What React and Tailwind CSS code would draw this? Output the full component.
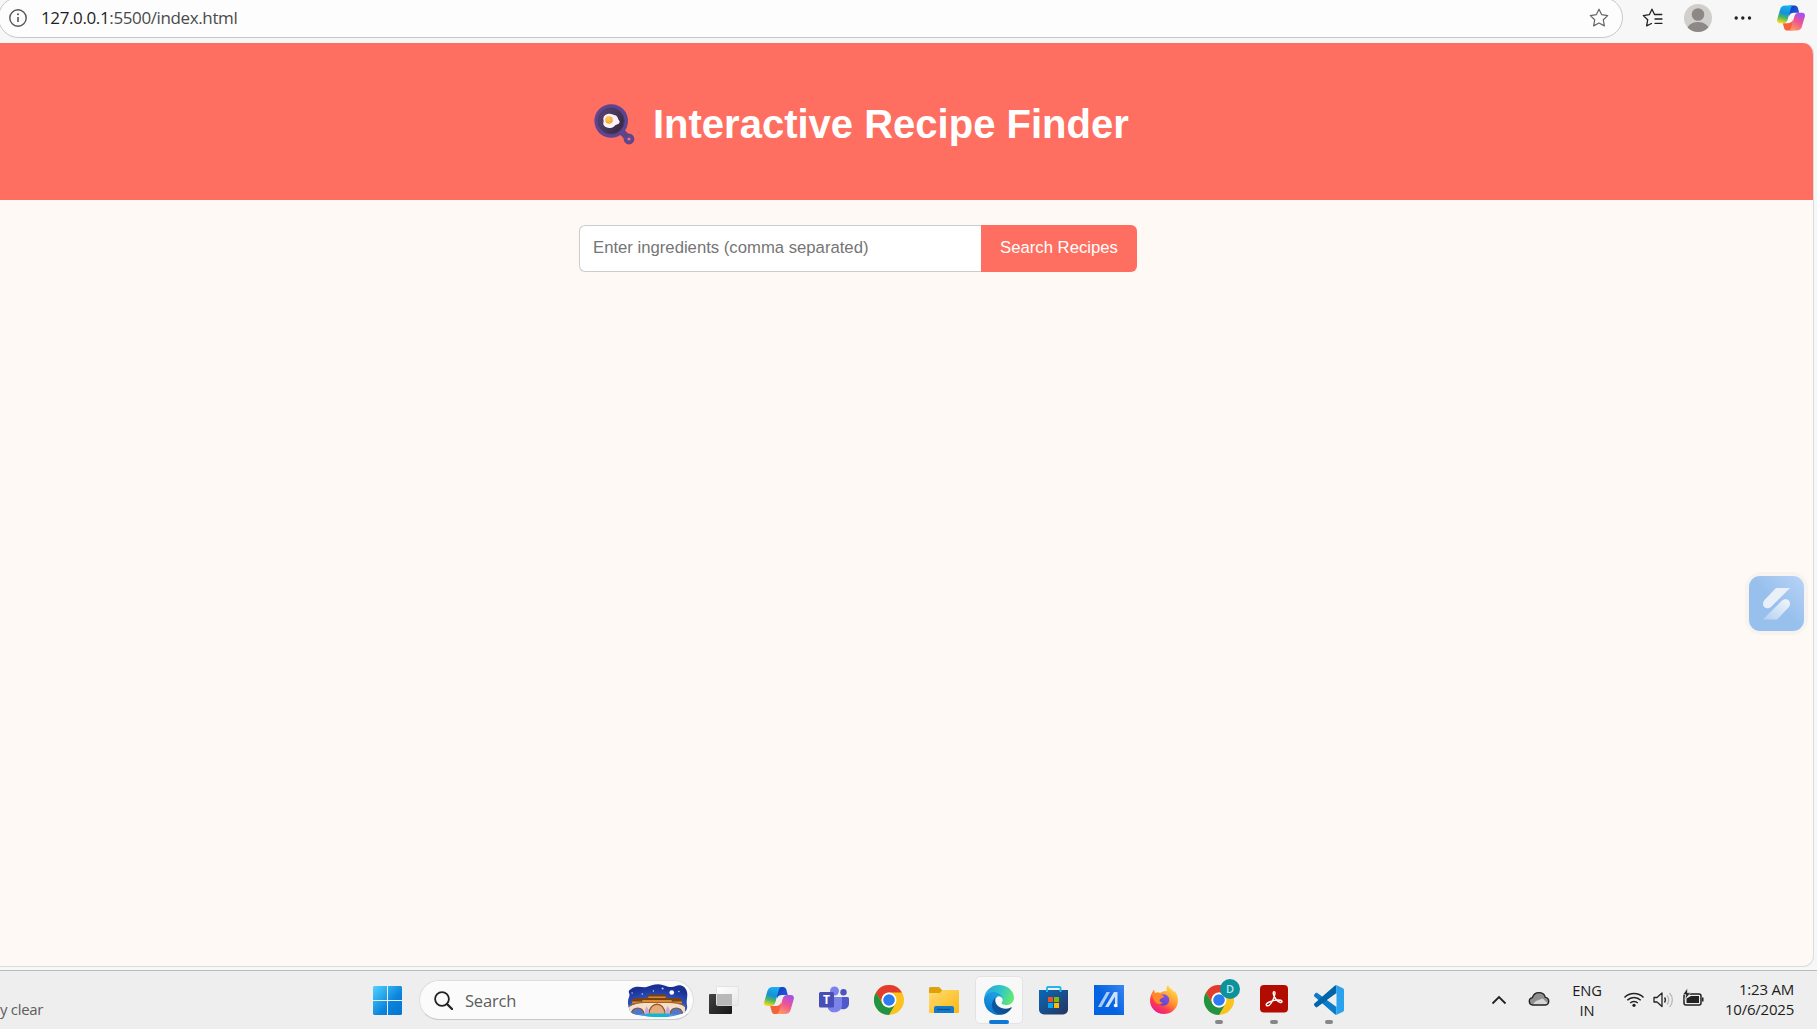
import React from "react";

const UI = "font-['Open_Sans','Noto_Sans',sans-serif]";

function Copilot({ id, className }) {
  return (
    <svg className={className} viewBox="0 0 30 27">
      <defs>
        <linearGradient id={id + "a"} x1="0.6" y1="0" x2="0.35" y2="1">
          <stop offset="0" stopColor="#18b0f4" />
          <stop offset="0.45" stopColor="#1590d8" />
          <stop offset="0.7" stopColor="#4cb860" />
          <stop offset="1" stopColor="#f5d820" />
        </linearGradient>
        <linearGradient id={id + "b"} x1="0.8" y1="0" x2="0.3" y2="1">
          <stop offset="0" stopColor="#a050f4" />
          <stop offset="0.5" stopColor="#ee5592" />
          <stop offset="1" stopColor="#ff9a62" />
        </linearGradient>
        <linearGradient id={id + "c"} x1="0" y1="0" x2="1" y2="1">
          <stop offset="0" stopColor="#1238b8" />
          <stop offset="1" stopColor="#2265e8" />
        </linearGradient>
      </defs>
      <path d="M13 0h6c1.800 0 2.800 1 3.300 2.600L23.800 8H18c-2.500 0-4 .8-5 3.500z" fill={`url(#${id}c)`} />
      <path d="M17 27h-6c-1.800 0-2.800-1-3.300-2.600L6.200 19H12c2.500 0 4-.8 5-3.500z" fill="#f4613c" />
      <path d="M9 0h9c-1.700 0-2.600 1-3.200 3L11.600 14.500C10.700 17.700 9.300 19 6.500 19H3.200C.6 19-.4 17.300.3 14.700L3.400 4C4.200 1.300 6 0 9 0z" fill={`url(#${id}a)`} />
      <path d="M21 27h-9c1.700 0 2.600-1 3.200-3L18.400 12.500C19.300 9.300 20.700 8 23.500 8h3.300c2.600 0 3.600 1.700 2.900 4.300L26.600 23C25.800 25.700 24 27 21 27z" fill={`url(#${id}b)`} />
    </svg>
  );
}

function Chrome() {
  return (
    <svg className="size-[30px]" viewBox="0 0 48 48">
      <circle cx="24" cy="24" r="24" fill="#fcc31e" />
      <path d="M3.200 12A24 24 0 0 1 44.800 12H24a12 12 0 0 0-10.400 18z" fill="#e33b2e" />
      <path d="M3.200 12A24 24 0 0 0 24 48L34.400 30A12 12 0 0 1 13.600 30z" fill="#229342" />
      <circle cx="24" cy="24" r="12" fill="#fff" />
      <circle cx="24" cy="24" r="9.300" fill="#2b7cf0" />
    </svg>
  );
}

function Pan() {
  return (
    <svg className="h-[41px] w-[41px]" viewBox="0 0 41 41">
      <defs>
        <linearGradient id="panIn" x1="0" y1="0" x2="1" y2="0.6">
          <stop offset="0" stopColor="#5c4674" />
          <stop offset="1" stopColor="#372b45" />
        </linearGradient>
        <radialGradient id="yolk" cx="0.4" cy="0.3" r="0.8">
          <stop offset="0" stopColor="#ffd050" />
          <stop offset="1" stopColor="#f09a2c" />
        </radialGradient>
      </defs>
      <path d="M26 26l7.500 7.500" stroke="#5d4586" strokeWidth="6.500" />
      <circle cx="35" cy="35" r="3.500" fill="none" stroke="#5d4590" strokeWidth="3.800" />
      <circle cx="17.200" cy="17" r="16.800" fill="#5d4590" />
      <circle cx="17.200" cy="17" r="13" fill="url(#panIn)" stroke="#4b3768" />
      <path d="M13.500 10c3-1 5 .5 7 1s3 1.500 3.500 3.500 2 2 1.500 4-3 1.500-4.500 3-3 3-5.500 2.500-4-.5-5.500-2.500 0-3-.5-5.500.5-5 4-6z" fill="#fbf1fb" />
      <circle cx="15" cy="16" r="3.800" fill="url(#yolk)" />
    </svg>
  );
}

function Star({ className }) {
  return (
    <svg className={className} viewBox="0 0 20 20" fill="none" stroke="currentColor" strokeWidth="1.200" strokeLinejoin="round">
      <path d="M10 1.200l2.700 5.500 6 .9-4.400 4.200 1.100 6.100L10 15l-5.400 2.900 1.100-6.100L1.300 7.600l6-.9z" />
    </svg>
  );
}

function AddressBar() {
  return (
    <div className="flex h-[43px] shrink-0 items-start bg-[#f7f7f7]">
      <div className="-ml-[2px] -mt-[3px] flex h-[41px] w-[1625px] items-center rounded-full border border-[#c6c6c6] bg-[#fdfdfd] pl-[10px] pr-[13px] pt-[1px]">
        <svg className="size-[18px]" viewBox="0 0 18 18" fill="none" stroke="#555" strokeWidth="1.400">
          <circle cx="9" cy="9" r="8.200" />
          <path d="M9 8v5" strokeWidth="1.600" />
          <circle cx="9" cy="5.300" r="1" fill="#555" stroke="none" />
        </svg>
        <div className={`${UI} ml-[14px] mt-[-1px] text-[17px] leading-[24px] tracking-[-0.380px] text-[#4a4a4a]`}>
          <span className="text-[#1f1f1f]">127.0.0.1</span>:5500/index.html
        </div>
        <Star className="ml-auto size-[20px] text-[#666]" />
      </div>
      <svg className="ml-[19px] mt-[8px] h-[20px] w-[21px]" viewBox="0 0 21 20" fill="none" stroke="#222" strokeWidth="1.300" strokeLinejoin="round" strokeLinecap="round">
        <path d="M12.500 6.500L10 1.200 7.300 6.700l-6 .9 4.400 4.200-1.100 6.100L9.500 15.500M12.500 6.500h7.300M13 11h7M13 15.300h7" />
      </svg>
      <svg className="ml-[21px] mt-[4px] size-[28px]" viewBox="0 0 28 28">
        <clipPath id="av"><circle cx="14" cy="14" r="14" /></clipPath>
        <circle cx="14" cy="14" r="14" fill="#d1cfcc" />
        <g clipPath="url(#av)" fill="#8c8886">
          <circle cx="14" cy="10.500" r="6.300" />
          <ellipse cx="14" cy="26" rx="11" ry="8" />
        </g>
      </svg>
      <svg className="ml-[22px] mt-[16px] h-[4px] w-[18px]" viewBox="0 0 18 4" fill="#222">
        <circle cx="2.200" cy="2" r="1.700" /><circle cx="8.800" cy="2" r="1.700" /><circle cx="15.500" cy="2" r="1.700" />
      </svg>
      <Copilot id="top" className="ml-[25px] mt-[5px] h-[26px] w-[28px]" />
    </div>
  );
}

function Page() {
  return (
    <div className="flex h-[924px] w-[1814px] shrink-0 flex-col overflow-hidden rounded-r-[11px] border-b border-r border-[#dcdcdc] bg-[#fff9f5] font-['Liberation_Sans',Arial,sans-serif]">
      <header className="flex h-[157px] shrink-0 items-start bg-[#ff6f61] pl-[594px] pt-[61px]">
        <Pan />
        <h1 className="ml-[18px] mt-[-3px] whitespace-nowrap text-[40px] font-bold leading-[46px] text-white">Interactive Recipe Finder</h1>
      </header>
      <div className="ml-[579px] mt-[25px] flex h-[47px]">
        <input
          className="w-[402px] rounded-l-[6px] border border-r-0 border-[#ccc] bg-white pb-[1px] pl-[13px] text-[16.700px] placeholder-[#757575] outline-none"
          placeholder="Enter ingredients (comma separated)"
        />
        <button className="w-[156px] rounded-r-[6px] bg-[#ff6f61] pb-[1px] text-[16.700px] text-white">Search Recipes</button>
      </div>
    </div>
  );
}

function FloatingBadge() {
  return (
    <div className="absolute left-[1745px] top-[572px] flex size-[63px] items-center justify-center rounded-[16px] bg-[#f7f3f1]">
      <svg className="size-[55px]" viewBox="0 0 55 55">
        <defs>
          <linearGradient id="bb" x1="1" y1="0" x2="0.5" y2="0.5">
            <stop offset="0" stopColor="#b9d3f6" />
            <stop offset="1" stopColor="#98c0ed" />
          </linearGradient>
          <linearGradient id="bs" x1="0" y1="1" x2="1" y2="0">
            <stop offset="0" stopColor="#b3d0f1" />
            <stop offset="1" stopColor="#f3f6fa" />
          </linearGradient>
        </defs>
        <rect width="55" height="55" rx="11" fill="url(#bb)" />
        <path d="M27 12h14L22 31c-4 3-8 .5-8-3 0-2 .7-3 2-4.500z" fill="#eaf0f8" />
        <path d="M28 43.500H14L33 24.500c4-3 8-.5 8 3 0 2-.7 3-2 4.500z" fill="url(#bs)" />
      </svg>
    </div>
  );
}

function SearchArt() {
  return (
    <svg className="h-[33px] w-[62px]" viewBox="0 0 61 33" preserveAspectRatio="none">
      <defs>
        <radialGradient id="sky" cx="0.5" cy="0.9" r="0.8" fx="0.5" fy="1">
          <stop offset="0" stopColor="#12c4dc" />
          <stop offset="0.3" stopColor="#5a90e0" />
          <stop offset="0.7" stopColor="#2a4fb8" />
          <stop offset="1" stopColor="#1a2f94" />
        </radialGradient>
        <clipPath id="blob"><path d="M5 5C10 1 16 4 20 3S30-1 36 1s8 3 13 1 10 1 11 6-1 8 0 13-2 8-6 9-10 3-16 3-14 0-20-1-12-1-14-5-3-10-1-14S0 8 5 5z" /></clipPath>
      </defs>
      <g clipPath="url(#blob)">
        <path fill="url(#sky)" d="M0 0h61v33H0z" />
        <path d="M20 13l2-2.500h17l2 2.500zM12 17l3-3h31l3 3zM5 18l3-4h7v4zM46 18v-4h7l3 4z" fill="#7c4010" />
        <path d="M22 12.500h17v1.500H22zM16 16h29v2.500H16zM6 17.500h9v2H6zM46 17.500h9v2h-9z" fill="#d68c30" />
        <path d="M3 30v-7c5-3 9-4 14-4h27c5 0 10 1 14 4v7h-2c-2-8-11-8-13 0h-4c-1-13-16-13-17 0h-4c-2-8-11-8-13 0z" fill="#f3dfca" />
        <path d="M22.500 30c1-13 15-13 16 0z" fill="#e3ac80" />
        <path d="M22.500 30c1-13 15-13 16 0" fill="none" stroke="#9d5c22" strokeWidth="1.300" />
        <path d="M5 30c2-8 11-8 13 0M43 30c2-8 11-8 13 0" fill="#5078c8" stroke="#8a5222" strokeWidth="1.200" />
        <path d="M3 22c5-3 9-3.500 14-3.500h27c5 0 10 .5 14 3.500" fill="none" stroke="#a9601b" />
        <path d="M18 29l2-7 2.500 4v4h-4zM38 29l3-7 2 4v4h-4z" fill="#c9a8dc" />
        <path d="M20 29.500h22V33H20z" fill="#10b8cf" />
        <circle cx="45" cy="8.500" r="2.300" fill="#fff" />
        <g fill="#bfd0f6"><circle cx="16" cy="10" r=".8" /><circle cx="27" cy="7" r=".7" /><circle cx="36" cy="4.500" r="1" /><circle cx="6" cy="9" r=".7" /><circle cx="52" cy="7.500" r=".8" /></g>
      </g>
    </svg>
  );
}

function Teams() {
  return (
    <svg className="size-[30px]" viewBox="0 0 30 30">
      <circle cx="24.500" cy="7.300" r="3.200" fill="#4b53bc" />
      <circle cx="15.500" cy="6" r="4.500" fill="#7b83eb" />
      <path d="M20 12h8.500c.8 0 1.500.6 1.500 1.500V19a5.500 5.500 0 0 1-8 4.700z" fill="#5059c9" />
      <path d="M9 12h14v8.500a7.500 7.500 0 0 1-14 3z" fill="#7b83eb" />
      <rect y="7" width="15" height="15.500" rx="1.500" fill="#474eb5" />
      <text x="7.500" y="19" textAnchor="middle" fontSize="12" fontWeight="bold" fontFamily="Open Sans, sans-serif" fill="#fff">T</text>
    </svg>
  );
}

function Edge() {
  return (
    <svg className="size-[30px]" viewBox="0 0 256 256">
      <defs>
        <linearGradient id="e1" x1="0" y1="0" x2="1" y2="0"><stop offset="0" stopColor="#0c59a4" /><stop offset="1" stopColor="#114a8b" /></linearGradient>
        <linearGradient id="e2" x1="0.6" y1="0.2" x2="0.3" y2="1"><stop offset="0" stopColor="#1b9de2" /><stop offset="1" stopColor="#0672cb" /></linearGradient>
        <linearGradient id="e3" x1="0" y1="0.3" x2="1" y2="0.6"><stop offset="0" stopColor="#2aa5e0" /><stop offset="0.5" stopColor="#2fc5c8" /><stop offset="1" stopColor="#66eb6e" /></linearGradient>
      </defs>
      <path fill="url(#e1)" d="M231 190.500c-3.400 1.800-6.900 3.400-10.500 4.700a101 101 0 0 1-36 6.500c-47.400 0-88.700-32.600-88.700-74.500a31.600 31.600 0 0 1 16.500-27.300c-42.900 1.800-53.900 46.500-53.900 72.700 0 74 68.200 81.500 82.900 81.500 7.900 0 19.800-2.300 27-4.600l1.300-.4a128.300 128.300 0 0 0 66.600-52.800 4 4 0 0 0-5.200-5.800z" />
      <path fill="url(#e2)" d="M105.700 241.400a79.200 79.200 0 0 1-22.700-21.300 80.700 80.700 0 0 1 29.500-120.200c3.100-1.500 8.400-4.100 15.500-4a32.400 32.400 0 0 1 25.700 13 31.900 31.900 0 0 1 6.300 18.700c0-.2 24.500-79.600-80-79.600-43.900 0-80 41.700-80 78.200a130.200 130.200 0 0 0 12.100 56 128 128 0 0 0 156.400 67 75.500 75.500 0 0 1-62.800-7.800z" />
      <path fill="url(#e3)" d="M152.300 148.900c-.8 1-3.300 2.500-3.300 5.700 0 2.600 1.700 5.100 4.700 7.300 14.400 10 41.500 8.600 41.600 8.600a59.600 59.600 0 0 0 30.300-8.300 61.400 61.400 0 0 0 30.400-52.900c.3-22.400-8-37.300-11.300-43.900C223.500 23.900 177.700 0 128 0A128 128 0 0 0 0 126.200c.5-36.500 36.800-66 80-66 3.500 0 23.500.3 42 10a72.600 72.600 0 0 1 30.900 29.300c6.100 10.600 7.200 24.100 7.200 29.500 0 5.400-2.700 13.300-7.800 19.900z" />
    </svg>
  );
}

function Firefox() {
  return (
    <svg className="size-[30px]" viewBox="0 0 30 30">
      <defs>
        <linearGradient id="ff" x1="0.85" y1="0.1" x2="0.25" y2="0.95"><stop offset="0" stopColor="#ffe44a" /><stop offset="0.45" stopColor="#ff9230" /><stop offset="0.75" stopColor="#ff3b50" /><stop offset="1" stopColor="#e81f8c" /></linearGradient>
        <linearGradient id="fp" x1="0.7" y1="0" x2="0.3" y2="1"><stop offset="0" stopColor="#8c50e8" /><stop offset="1" stopColor="#5648c8" /></linearGradient>
      </defs>
      <path d="M19 0c1 3 4 4 6 7l1-1c3 4 3.500 9 2.500 13C27 25 21.500 29 15 29 7 29 1 23 1 15.500 1 11 3 7.500 5 4.500L6 8c2-1 4-1 5 0 3-2 5-2 7-2-1-2-.5-4.500 1-6z" fill="url(#ff)" />
      <circle cx="14.500" cy="15" r="5.800" fill="url(#fp)" />
      <path d="M3 8c4 0 6 0 8 1.500l4 1.500c0 2-3 2-4 3.500s1 3 3 3.500c-3 2-7 1-8.500-2S3 10 3 8z" fill="#ff8a28" />
    </svg>
  );
}

function Task({ running, active, children }) {
  return (
    <div className={active ? "relative flex size-[48px] items-center justify-center rounded-[5px] border border-[#e3e3e3] bg-[#f8f8f8]" : "relative flex size-[48px] items-center justify-center"}>
      {children}
      {active && <span className="absolute bottom-[-1px] left-[13px] h-[4px] w-[20px] rounded-full bg-[#0f78d4]" />}
      {running && <span className="absolute bottom-0 left-[20px] h-[4px] w-[8px] rounded-full bg-[#878787]" />}
    </div>
  );
}

function Taskbar() {
  return (
    <div className={`${UI} flex h-[59px] shrink-0 items-start border-t border-[#b9bcbc] bg-[#eeeeee]`}>
      <div className="mt-[27px] w-[373px] whitespace-nowrap text-[15px] leading-[22px] tracking-[-0.300px] text-[#5d5d5d]">y clear</div>
      <svg className="mt-[15px] size-[29px]" viewBox="0 0 29 29">
        <defs><linearGradient id="win" gradientUnits="userSpaceOnUse" x1="0" y1="0" x2="29" y2="29"><stop offset="0" stopColor="#50d3ff" /><stop offset="0.600" stopColor="#0a84dc" /><stop offset="1" stopColor="#0474d0" /></linearGradient></defs>
        <path fill="url(#win)" d="M1 0h13v14H0V1zM15 0h13l1 1v13H15zM0 15h14v14H1l-1-1zM15 15h14v13l-1 1H15z" />
      </svg>
      <div className="ml-[17px] mt-[9px] flex h-[40px] w-[275px] items-center rounded-full border border-b-[#c8c8c8] border-[#dedede] bg-[#fbfbfb] pl-[14px] pr-[5px]">
        <svg className="size-[19px]" viewBox="0 0 19 19" fill="none" stroke="#222" strokeWidth="1.800" strokeLinecap="round">
          <circle cx="8" cy="8" r="6.900" /><path d="M13 13l5 5" strokeWidth="2.300" />
        </svg>
        <span className="ml-[12px] mt-[1px] text-[16.500px] leading-[24px] tracking-[-0.200px] text-[#5d5d5d]">Search</span>
        <div className="ml-auto mt-[1px]"><SearchArt /></div>
      </div>
      <div className="ml-[6px] mt-[5px] flex gap-[7px]">
        <Task>
          <svg className="size-[30px]" viewBox="0 0 30 30">
            <defs>
              <linearGradient id="tv" x1="0" y1="0" x2="1" y2="1"><stop offset="0" stopColor="#444" /><stop offset="1" stopColor="#161616" /></linearGradient>
              <linearGradient id="tw" x1="0" y1="0" x2="1" y2="1"><stop offset="0" stopColor="#fff" /><stop offset="1" stopColor="#e8e8e8" /></linearGradient>
            </defs>
            <rect y="9" width="23" height="20" rx="1" fill="url(#tv)" />
            <rect x="7.500" y="1.500" width="22" height="19" rx="1" fill="url(#tw)" stroke="#e2e2e2" />
            <path d="M8 9h15v11.500H8z" fill="#b8b8b8" />
          </svg>
        </Task>
        <Task><Copilot id="tb" className="h-[27px] w-[30px]" /></Task>
        <Task><Teams /></Task>
        <Task><Chrome /></Task>
        <Task>
          <svg className="size-[30px]" viewBox="0 0 30 30">
            <defs><linearGradient id="fo" x1="0" y1="0" x2="1" y2="1"><stop offset="0" stopColor="#ffdc70" /><stop offset="1" stopColor="#fcb714" /></linearGradient></defs>
            <path d="M0 3.500C0 2.700.7 2 1.500 2H10l3 3v5H0z" fill="#e0a008" />
            <path d="M0 8h11l2.500-3H29a1 1 0 0 1 1 1v21a1 1 0 0 1-1 1H1a1 1 0 0 1-1-1z" fill="url(#fo)" />
            <path d="M5 28v-5a2 2 0 0 1 2-2h16a2 2 0 0 1 2 2v5z" fill="#127bc8" /><path d="M8 24.500h13" stroke="#0b4f90" strokeWidth="1.200" />
          </svg>
        </Task>
        <Task active><Edge /></Task>
        <Task>
          <svg className="size-[30px]" viewBox="0 0 30 30">
            <defs><linearGradient id="st" x1="0" y1="0" x2="1" y2="1"><stop offset="0" stopColor="#0869b8" /><stop offset="1" stopColor="#28345e" /></linearGradient></defs>
            <path d="M0 5h29v19.500a5 5 0 0 1-5 5H5a5 5 0 0 1-5-5z" fill="url(#st)" />
            <path d="M8 7V2.800C8 2.300 8.400 2 9 2h11.500c.6 0 1 .3 1 .8V7" fill="none" stroke="#25b5ea" strokeWidth="1.900" />
            <path d="M9 12h5v5H9z" fill="#f25022" /><path d="M15 12h5v5h-5z" fill="#7fba00" /><path d="M9 18h5v5H9z" fill="#00a4ef" /><path d="M15 18h5v5h-5z" fill="#ffb900" />
          </svg>
        </Task>
        <Task>
          <svg className="size-[30px]" viewBox="0 0 30 30">
            <defs><linearGradient id="as" x1="1" y1="0" x2="0.4" y2="0.5"><stop offset="0" stopColor="#3c86f2" /><stop offset="1" stopColor="#0463e0" /></linearGradient></defs>
            <path d="M0 0h30v30H0z" fill="url(#as)" />
            <path d="M4 22l8.500-15h3.500L7.500 22z" fill="#a9ccfa" />
            <path d="M11 22l9-15h3.500v15h-2.500V11.500L14.500 22z" fill="#cfe2fc" />
            <circle cx="21.500" cy="20.500" r="1.700" fill="#fff" />
          </svg>
        </Task>
        <Task><Firefox /></Task>
        <Task running>
          <Chrome />
          <span className="absolute left-[25px] top-[3px] flex size-[20px] items-center justify-center rounded-full bg-[#0b929d] text-[11px] font-semibold text-[#b9e6e6]">D</span>
        </Task>
        <Task running>
          <svg className="mt-[-2px] size-[28px]" viewBox="0 0 28 28">
            <rect width="28" height="27.500" rx="4" fill="#b30b00" />
            <path d="M6.500 20.500c-1-1 .5-2.800 4-4 3.500-1.300 7-1.800 10-1.200 2.500.5 1.500 2.700-.5 2-3-1-6-5-6.700-8.500-.4-2.700 1.900-3 1.700-.3-.3 4-4.500 12.500-7.300 12.300-.5 0-.9 0-1.200-.3z" fill="none" stroke="#fff" strokeWidth="1.400" />
          </svg>
        </Task>
        <Task running>
          <svg className="size-[30px]" viewBox="0 0 100 100">
            <path d="M1.300 32L5.500 26.700c1.600-1.400 3.900-1.500 5.600-.2L75 73v24l-4 2L1.300 38.200c-1.800-1.600-1.800-4.500 0-6.200z" fill="#0a7cca" />
            <path d="M1.300 68L5.500 73.500c1.600 1.400 3.900 1.500 5.600.2L75 27V3L71 1 1.300 61.800c-1.800 1.600-1.800 4.500 0 6.200z" fill="#0065a9" />
            <path d="M75.900 99.300c-2.300.9-4.900.4-6.700-1.400C71.400 100 75 98.500 75 95.500V4.500c0-3-3.600-4.500-5.800-2.400 1.800-1.800 4.400-2.300 6.700-1.300l20.600 9.900C98.600 11.700 100 14 100 16.300v67.400c0 2.400-1.400 4.600-3.500 5.600z" fill="#2aa3ee" />
          </svg>
        </Task>
      </div>
      <svg className="ml-[138px] mt-[24px] h-[10px] w-[16px]" viewBox="0 0 16 10" fill="none" stroke="#222" strokeWidth="1.800"><path d="M1.500 8.500L8 2l6.500 6.500" /></svg>
      <svg className="ml-[21px] mt-[20px] h-[16px] w-[22px]" viewBox="0 0 21 16" preserveAspectRatio="none">
        <path d="M4.500 14a3.700 3.700 0 0 1-.3-7.300C5 4 7.500 1.700 10.500 1.700s5.300 2 6 4.600A3.900 3.900 0 0 1 16.500 14z" fill="#8f8f8f" />
        <path d="M4 14.200L7.500 10 14 7.500l5 5-2 1.500z" fill="#d6d6d6" />
        <path d="M4.500 14a3.700 3.700 0 0 1-.3-7.300C5 4 7.500 1.700 10.500 1.700s5.300 2 6 4.600A3.900 3.900 0 0 1 16.500 14z" fill="none" stroke="#222" strokeWidth="1.300" />
      </svg>
      <div className="ml-[17px] mt-[9px] w-[40px] text-center text-[14.700px] leading-[20px] tracking-[-0.200px] text-[#1c1c1c]">ENG<br />IN</div>
      <svg className="ml-[16px] mt-[20px] h-[17px] w-[22px]" viewBox="0 0 22 17" fill="none" stroke="#222" strokeWidth="1.500">
        <path d="M1.500 6.500a13.500 13.500 0 0 1 19 0M4.300 9.300a9.500 9.500 0 0 1 13.400 0M7.200 12a5.500 5.500 0 0 1 7.600 0" /><circle cx="11" cy="14.300" r="1.600" fill="#222" stroke="none" />
      </svg>
      <svg className="ml-[8px] mt-[20px] h-[18px] w-[21px]" viewBox="0 0 21 18" fill="none" stroke="#222" strokeWidth="1.300" strokeLinejoin="round">
        <path d="M1 6.500h3L9 2v13.500L4 11H1z" /><path d="M11.500 6.500c1.200 1.500 1.200 3.500 0 5" /><path d="M14 4.500c2.300 2.500 2.300 6.500 0 9M16.500 2c3.800 4 3.800 10 0 14" stroke="#b8b8b8" />
      </svg>
      <svg className="ml-[9px] mt-[17px] h-[19px] w-[21px]" viewBox="0 0 21 19">
        <rect x="1" y="6" width="17" height="11" rx="2" fill="none" stroke="#222" strokeWidth="1.500" />
        <path d="M19 9.500h1.500v4H19z" fill="#222" /><path d="M8 8h8v7H3.500v-4.500z" fill="#222" />
        <path d="M4.500 0L0 6.500h3L2 11.500 7.500 4.800H4.300z" fill="#222" stroke="#eee" strokeWidth=".6" />
      </svg>
      <div className="ml-auto mr-[23px] mt-[8px] text-right text-[15px] leading-[20px] tracking-[-0.220px] text-[#1c1c1c]">1:23 AM<br />10/6/2025</div>
    </div>
  );
}

export default function App() {
  return (
    <div className="relative flex h-[1029px] w-[1817px] flex-col overflow-hidden bg-[#f7f7f7]">
      <AddressBar />
      <Page />
      <div className="h-[3px] shrink-0 bg-[#f8f8f8]" />
      <Taskbar />
      <FloatingBadge />
    </div>
  );
}
